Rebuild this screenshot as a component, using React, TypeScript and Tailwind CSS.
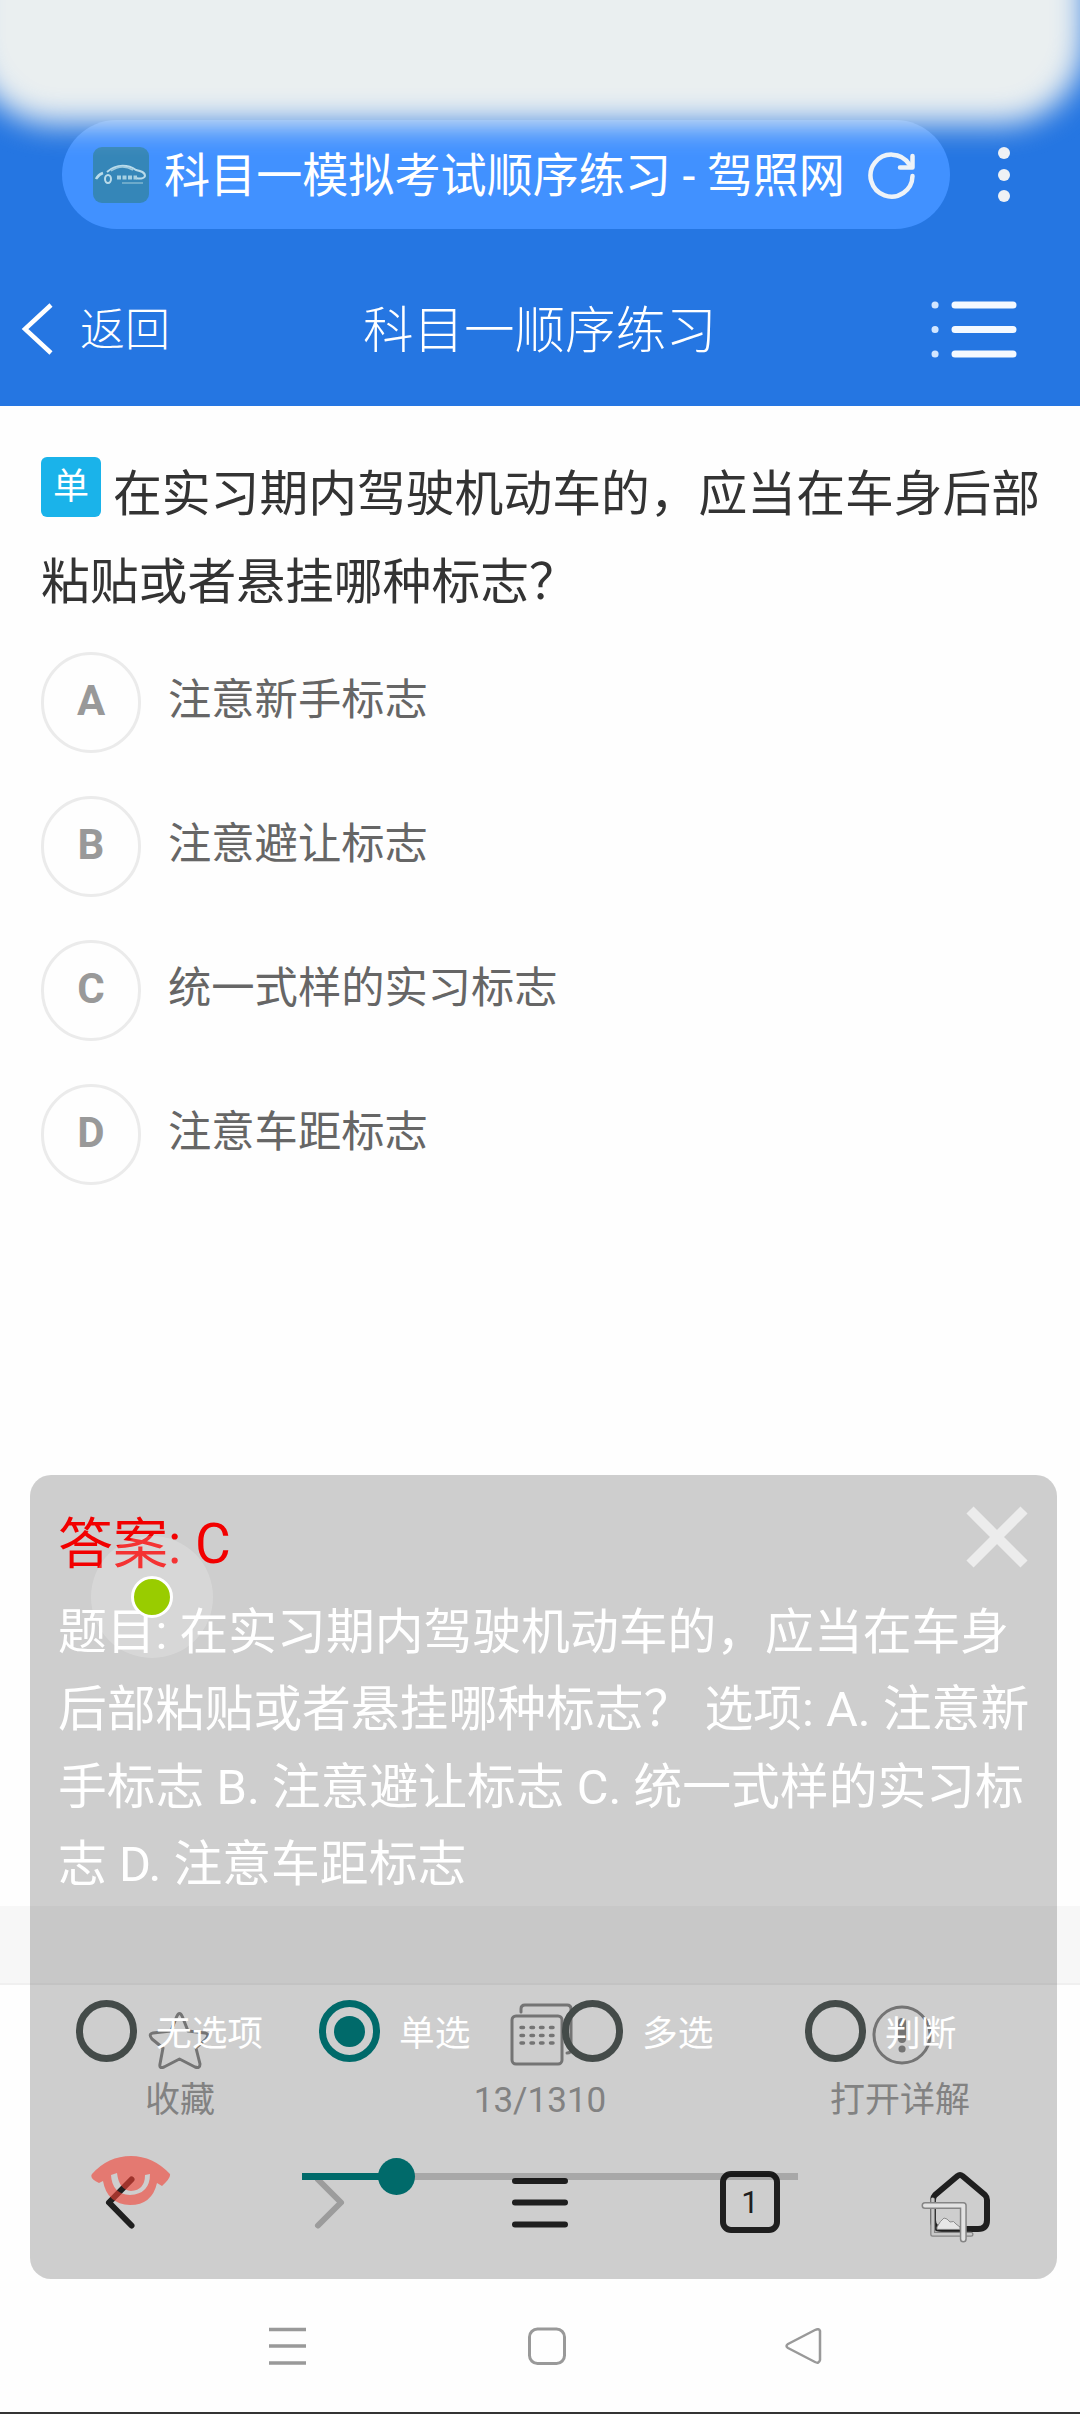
import type { ReactNode } from "react";

const OPTIONS = [
  { key: "A", text: "注意新手标志" },
  { key: "B", text: "注意避让标志" },
  { key: "C", text: "统一式样的实习标志" },
  { key: "D", text: "注意车距标志" },
];

const KINDS = ["无选项", "单选", "多选", "判断"];

const ANSWER_LINES = [
  "题目: 在实习期内驾驶机动车的，应当在车身",
  "后部粘贴或者悬挂哪种标志？ 选项: A. 注意新",
  "手标志 B. 注意避让标志 C. 统一式样的实习标",
  "志 D. 注意车距标志",
];

export default function App() {
  return (
    <div className="relative h-[2414px] w-[1080px] overflow-hidden bg-[#fefefe] font-['Roboto','Noto_Sans_CJK_SC',sans-serif]">
      <Header />
      <Question />
      <div className="mt-[721px] h-[79px] border-b-2 border-[#f0f0f0] bg-[#f7f7f7]" />
      <QuizToolbar />
      <BrowserToolbar />
      <SystemNav />
      <AnswerPanel />
    </div>
  );
}

function Header() {
  return (
    <header className="relative h-[406px] overflow-hidden bg-[#2576e2] pt-[120px] text-white">
      {/* Address bar */}
      <div className="flex items-center pl-[62px]">
        <div className="flex h-[109px] w-[888px] items-center rounded-full bg-[#4191ff] pl-[31px]">
          <SiteIcon />
          <span className="mt-[3px] ml-[15px] w-[695px] text-[46.1px] leading-[60px] whitespace-nowrap">科目一模拟考试顺序练习 - 驾照网</span>
          <svg className="ml-[8px] h-[50px] w-[50px]" viewBox="0 0 50 50" fill="none" stroke="#eef3f8" strokeWidth="4.5" strokeLinecap="round" strokeLinejoin="round">
            <path d="M45.500 26A21 21 0 1 1 42 14" />
            <path d="M45.500 6V17.500H33" />
          </svg>
        </div>
        <div className="ml-[48px] flex flex-col gap-[9.5px]">
          {[0, 1, 2].map((i) => <div key={i} className="h-3 w-3 rounded-full bg-[#eef1f5]" />)}
        </div>
      </div>

      {/* Page bar */}
      <div className="mt-[23px] flex h-[154px] items-center pl-[18px]">
        <svg className="h-[56px] w-[38px]" viewBox="0 0 38 56" fill="none" stroke="#fff" strokeWidth="4.5">
          <path d="M33 4L7 28L33 52" />
        </svg>
        <span className="mt-[4px] ml-[24px] w-[283px] text-[45px] leading-[60px] font-light whitespace-nowrap">返回</span>
        <span className="mt-[4px] w-[567px] text-[50.5px] leading-[60px] font-light">科目一顺序练习</span>
        <svg className="h-[64px] w-[90px]" viewBox="0 0 90 64" stroke="#f4f9ff" strokeWidth="7" strokeLinecap="round">
          <path d="M25 8H83M25 32.500H83M25 57H83" />
          <path d="M5 8H5.100M5 32.500H5.100M5 57H5.100" strokeWidth="7" stroke="#d2e6ff" />
        </svg>
      </div>

      {/* Blurred status bar */}
      <div className="absolute -top-20 -left-[30px] h-[204px] w-[1115px] rounded-b-[84px] bg-[#eaeff0] blur-[15px]" />
    </header>
  );
}

function SiteIcon() {
  return (
    <svg className="h-[56px] w-[56px]" viewBox="0 0 56 56">
      <rect width="56" height="56" rx="9" fill="#3586b8" />
      <path d="M3 32C5 28 7 27 10 26" fill="none" stroke="#b9dbea" strokeWidth="2.500" />
      <path d="M14 25C24 16 36 18 43 23C48 24 52 25 52 29C51 32 46 32 43 31" fill="none" stroke="#b9dbea" strokeWidth="2" />
      <path d="M18 24C25 19 33 19 40 23" fill="none" stroke="#9fcbe0" strokeWidth="1.500" />
      <ellipse cx="15" cy="32" rx="3" ry="4" fill="none" stroke="#b9dbea" strokeWidth="2" />
      <path d="M24 30.500H44" stroke="#a6d0e2" strokeWidth="4" strokeDasharray="4 1.500" />
      <path d="M29 36H50" stroke="#7fb6d2" strokeWidth="1.500" />
    </svg>
  );
}

function Question() {
  return (
    <main className="pt-[45px] pl-[41px]">
      <p className="text-[48.8px] leading-[88px] whitespace-nowrap text-[#333]">
        <span className="mr-[12px] inline-flex h-[60px] w-[60px] items-center justify-center rounded-md bg-[#1ab3ea] align-[12px] text-[36px] leading-[40px] text-white">单</span>
        在实习期内驾驶机动车的，应当在车身后部
        <br />
        粘贴或者悬挂哪种标志？
      </p>
      <div className="mt-[25px] flex flex-col gap-[43px]">
        {OPTIONS.map((o) => (
          <div key={o.key} className="flex h-[101px] items-center">
            <span className="flex h-[101px] w-[100px] items-center justify-center rounded-full border-[3px] border-[#ebebeb] pb-[3px] text-[42px] leading-[50px] font-bold text-[#999]">{o.key}</span>
            <span className="mb-[4px] ml-[27px] text-[43.3px] leading-[50px] text-[#666]">{o.text}</span>
          </div>
        ))}
      </div>
    </main>
  );
}

function ToolbarItem({ label, children }: { label: string; children: ReactNode }) {
  return (
    <div className="flex flex-col items-center">
      <svg className="h-[70px] w-[80px]" viewBox="0 0 80 70" fill="none" stroke="#8f8f8f" strokeWidth="3" strokeLinejoin="round" strokeLinecap="round">
        {children}
      </svg>
      <span className="mt-[11px] text-[35px] leading-[40px] text-[#a0a0a0]">{label}</span>
    </div>
  );
}

function QuizToolbar() {
  return (
    <div className="grid h-[135px] grid-cols-3 pt-[15px]">
      <ToolbarItem label="收藏">
        <path d="M36.500 17Q39.500 10 42.500 17L48 31L65 33Q70 34 66 39L56 48L60 64Q60 69 55 67L39.500 59L24 67Q19 69 20 64L23 48L12 39Q8 34 13 33L31 31Z" />
      </ToolbarItem>
      <ToolbarItem label="13/1310">
        <rect x="12" y="16" width="50" height="48" rx="4" />
        <path d="M21 12V9Q21 5 25 5H67Q71 5 71 9V49Q71 53 67 53" />
        {[27.5, 35.5, 43].map((y) => (
          <path key={y} d={`M21 ${y}H23.500M31 ${y}H33.500M40.500 ${y}H43M50.500 ${y}H53`} strokeWidth="3.500" />
        ))}
      </ToolbarItem>
      <ToolbarItem label="打开详解">
        <circle cx="42" cy="35" r="28" />
        <path d="M42 22L42 39" strokeWidth="8" />
        <path d="M42 49H42.100" strokeWidth="7" />
      </ToolbarItem>
    </div>
  );
}

function BrowserToolbar() {
  return (
    <div className="mt-[22px] grid h-[120px] grid-cols-5 place-items-center px-[15px]">
      <NavIcon><path d="M46.500 12.500L24 35.500L46.500 58.500" /></NavIcon>
      <NavIcon><path d="M23 12.500L46 35.500L23 58.500" stroke="#c0c0c0" /></NavIcon>
      <NavIcon><path d="M10 14H60M10 35.500H60M10 57.500H60" /></NavIcon>
      <div className="flex h-[62px] w-[60px] items-center justify-center rounded-[11px] border-[6px] border-[#272727] text-[31px] leading-none text-[#272727]">1</div>
      <NavIcon><path d="M32.500 9Q35 7 37.500 9L60 28Q62 30 62 33V53Q62 62 53 62H17Q8 62 8 53V33Q8 30 10 28Z" /></NavIcon>
    </div>
  );
}

function NavIcon({ children }: { children: ReactNode }) {
  return (
    <svg className="h-[70px] w-[70px]" viewBox="0 0 70 70" fill="none" stroke="#272727" strokeWidth="6" strokeLinecap="round" strokeLinejoin="round">
      {children}
    </svg>
  );
}

function SystemNav() {
  return (
    <div className="h-[152px] border-b-[2px] border-[#333] pt-[64px]">
      <div className="ml-[159px] grid w-[774px] grid-cols-3 justify-items-center">
        <svg className="h-[40px] w-[40px]" viewBox="0 0 40 40" stroke="#999" strokeWidth="3.500"><path d="M1 3.500H38M1 20H38M1 37H38" /></svg>
        <svg className="h-[40px] w-[40px]" viewBox="0 0 40 40" fill="none" stroke="#999" strokeWidth="3"><rect x="3.500" y="3" width="35" height="34.500" rx="8" /></svg>
        <svg className="h-[40px] w-[40px]" viewBox="0 0 40 40" fill="none" stroke="#999" strokeWidth="2.500" strokeLinejoin="round"><path d="M4 18L31 4Q35 2 36 5V34Q35 38 31 36L4 22Q1 20 4 18Z" /></svg>
      </div>
    </div>
  );
}

function AnswerPanel() {
  return (
    <section className="absolute top-[1475px] left-[30px] h-[804px] w-[1027px] rounded-[21px] bg-black/19 pt-[30px] pl-[28px]">
      <div className="flex h-[89px] items-start justify-between pr-[29px]">
        <h2 className="text-[55px] leading-[78px] text-[#f20000]">答案: C</h2>
        <svg className="mt-[1px] h-[62px] w-[62px]" viewBox="0 0 62 62" stroke="#ececec" strokeWidth="10"><path d="M4 4L58 58M58 4L4 58" /></svg>
      </div>
      <div className="text-[48.8px] leading-[77.3px] whitespace-nowrap text-white">
        {ANSWER_LINES.map((line) => <p key={line}>{line}</p>)}
      </div>

      {/* Question type */}
      <div className="mt-[97px] flex pl-[18px]">
        {KINDS.map((kind) => (
          <label key={kind} className="flex w-[243px] items-center">
            <Radio checked={kind === "单选"} />
            <span className="mt-[6px] ml-[19px] text-[35.7px] leading-[50px] whitespace-nowrap text-white">{kind}</span>
          </label>
        ))}
      </div>

      {/* Eye, opacity slider, crop */}
      <div className="mt-[88px] flex items-start pl-[32px]">
        <svg className="h-[60px] w-[82px]" viewBox="0 0 82 60" opacity="0.6">
          <path d="M2 24Q18 6 41 6Q63 6 80 24Q81 28 72 36L67 33Q62 55 40 55Q17 54 13 31L9 33Q-1 28 2 24ZM21 25Q22 44 40 45Q60 44 60 24L55 25Q55 40 41 41Q29 40 27 23Z" fill="#f34135" fillRule="evenodd" />
        </svg>
        <div className="relative mt-[8.5px] ml-[130px] flex h-[36px] w-[496px] items-center">
          <div className="h-[7px] w-[94px] bg-[#006a6a]" />
          <div className="h-[7px] flex-1 bg-black/18" />
          <div className="absolute left-[76px] h-[37px] w-[37px] rounded-full bg-[#006a6a]" />
        </div>
        <svg className="mt-[45.5px] ml-[122px] h-[50px] w-[56px]" viewBox="0 0 56 50" fill="none" strokeLinecap="round" strokeLinejoin="round">
          <path d="M17 33V31Q20 25 24 22Q27 22 30 26Q34 24 36 28L40 31V33Z" fill="#e6e6e6" stroke="#8c8c8c" />
          <path d="M12.700 4V38.300H51" stroke="#858585" strokeWidth="5" />
          <path d="M12.700 3V38.300H51" stroke="#c8c8c8" strokeWidth="2.500" />
          <path d="M5 9.500H43.300V43" stroke="#858585" strokeWidth="7" />
          <path d="M5 9.500H43.300V43" stroke="#e2e2e2" strokeWidth="4" />
        </svg>
      </div>

      {/* Touch pointer */}
      <div className="absolute top-[61px] left-[60.5px] flex h-[122px] w-[122px] items-center justify-center rounded-full bg-white/20">
        <div className="h-[42px] w-[42px] rounded-full border-[3px] border-white bg-[#99cc00]" />
      </div>
    </section>
  );
}

function Radio({ checked }: { checked: boolean }) {
  return (
    <span className={checked ? "flex h-[62px] w-[61px] items-center justify-center rounded-full border-[7px] border-[#006a6a]" : "h-[62px] w-[61px] rounded-full border-[7px] border-[#444b49]"}>
      {checked && <span className="h-[31px] w-[31px] rounded-full bg-[#006a6a]" />}
    </span>
  );
}
